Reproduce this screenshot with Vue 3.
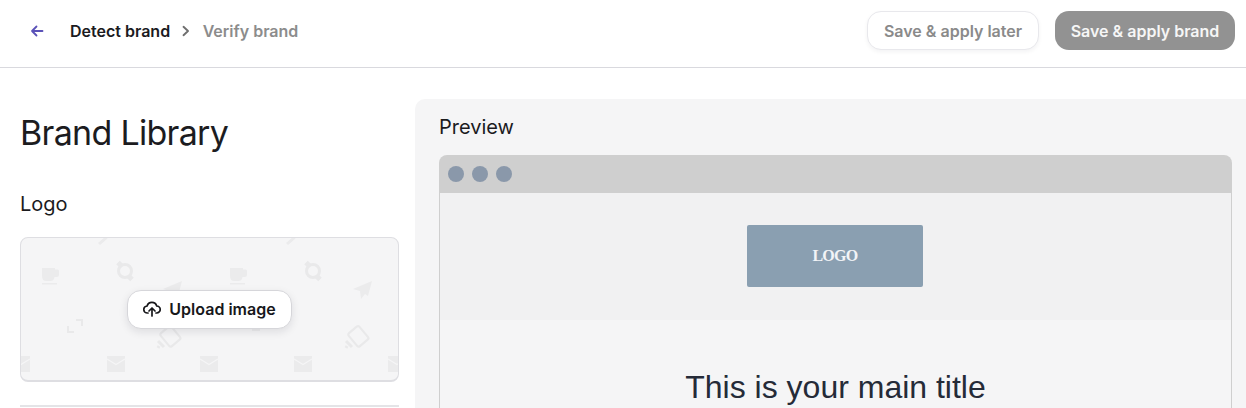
<template>
  <div class="page">
    <header class="topbar">
      <div class="crumbs">
        <button class="back" aria-label="Back">
          <svg width="16" height="16" viewBox="0 0 16 16" fill="none" stroke="#5b52b8" stroke-width="1.800" stroke-linecap="round" stroke-linejoin="round">
            <path d="M13.500 8H3M7.500 3.500 3 8l4.500 4.500" />
          </svg>
        </button>
        <span class="crumb-active">Detect brand</span>
        <svg class="chevron" width="10" height="12" viewBox="0 0 10 12" fill="none" stroke="#6f6f6f" stroke-width="1.900" stroke-linecap="round" stroke-linejoin="round">
          <path d="M2.500 1.800 7 6l-4.500 4.200" />
        </svg>
        <span class="crumb-next">Verify brand</span>
      </div>
      <div class="actions">
        <button class="btn btn-later">Save &amp; apply later</button>
        <button class="btn btn-apply">Save &amp; apply brand</button>
      </div>
    </header>

    <main class="content">
      <aside class="library">
        <h1>Brand Library</h1>
        <h2>Logo</h2>
        <div class="dropzone">
          <svg class="pattern" width="379" height="145" viewBox="0 0 379 145" fill="#ebebec">
            <defs>
              <g id="cup">
                <path d="M0 0h13v1.500h2.500a1.500 1.500 0 0 1 1.500 1.500v4a2 2 0 0 1-2 2h-2.500c-.6 3-2 4-4 4H4c-2.500 0-4-2-4-5z" />
                <rect x="0" y="15" width="15" height="1.500" />
              </g>
              <g id="mail">
                <rect width="18" height="16" />
                <path d="M0 3 9 8.500 18 3" fill="none" stroke="#f5f5f6" stroke-width="1.200" />
              </g>
              <g id="watch" fill="none" stroke="#e9e9ea" stroke-width="3">
                <circle cx="10" cy="10" r="6.500" />
                <path d="M3 1.500l4 4M13 14.500l4 4" stroke-width="5" />
              </g>
              <path id="plane" d="M19 0 0 8l7 2 1 8 4-5 3 2z" />
              <g id="tablet" fill="none" stroke="#e9e9ea" stroke-width="2.200">
                <rect x="6" y="2" width="14" height="17" rx="2" transform="rotate(-40 13 10)" />
                <path d="M1 15l6 6M2 20l-1 2" stroke-width="3" />
              </g>
            </defs>
            <use href="#cup" x="22" y="31" />
            <use href="#cup" x="210" y="31" />
            <use href="#watch" x="95" y="24" />
            <use href="#watch" x="283" y="24" />
            <use href="#plane" x="143" y="44" />
            <use href="#plane" x="333" y="44" />
            <use href="#tablet" x="137" y="89" />
            <use href="#tablet" x="325" y="89" />
            <use href="#mail" x="87" y="119" />
            <use href="#mail" x="180" y="119" />
            <use href="#mail" x="274" y="119" />
            <use href="#mail" x="-8" y="119" />
            <use href="#mail" x="368" y="119" />
            <path d="M78 6l7-6h3l-1 2-7 6zM266 6l7-6h3l-1 2-7 6z" />
            <rect x="232" y="92" width="8" height="2" />
            <path d="M56 83h6v6M54 95h-6v-6" fill="none" stroke="#e9e9ea" stroke-width="2" />
          </svg>
          <button class="upload">
            <svg width="18" height="16" viewBox="0 0 18 16" fill="none" stroke="#17171a" stroke-width="1.700" stroke-linecap="round" stroke-linejoin="round">
              <path d="M5 12H4.500a3.500 3.500 0 0 1-.4-7A5 5 0 0 1 13.700 5a3.500 3.500 0 0 1 0 7H13" />
              <path d="M9 15V7.500M6 10l3-3 3 3" />
            </svg>
            Upload image
          </button>
        </div>
        <div class="divider"></div>
      </aside>

      <section class="preview">
        <h2>Preview</h2>
        <div class="browser">
          <div class="browser-bar">
            <span class="dot"></span>
            <span class="dot"></span>
            <span class="dot"></span>
          </div>
          <div class="mail-head">
            <div class="logo-box">LOGO</div>
          </div>
          <div class="mail-body">
            <p class="main-title">This is your main title</p>
          </div>
        </div>
      </section>
    </main>
  </div>
</template>

<script setup>
</script>

<style>
html,
body {
  margin: 0;
  background: #fff;
  overflow: hidden;
}
</style>

<style scoped>
.page {
  width: 1246px;
  height: 408px;
  overflow: hidden;
  font-family: Inter, "Liberation Sans", sans-serif;
  color: #1b1b1e;
  background: #fff;
}

.topbar {
  height: 67px;
  display: flex;
  align-items: center;
  justify-content: space-between;
  padding: 0 11px 0 29px;
  border-bottom: 1px solid #d9d9de;
}

.crumbs {
  display: flex;
  align-items: center;
  margin-bottom: 6px;
  font-size: 16px;
  font-weight: 600;
}

.back {
  width: 16px;
  height: 16px;
  padding: 0;
  margin-right: 25px;
  border: 0;
  background: none;
  display: flex;
}

.chevron {
  margin: 0 11.500px 0 11px;
}

.crumb-next {
  color: #8c8c8c;
}

.actions {
  display: flex;
  gap: 16px;
  margin-bottom: 6px;
}

.btn {
  height: 39px;
  border-radius: 14px;
  font-family: inherit;
  font-size: 16px;
  font-weight: 600;
}

.btn-later {
  width: 172px;
  background: #fff;
  color: #8a8a8a;
  border: 1px solid #e8e8ec;
  box-shadow: 0 2px 4px rgba(20, 20, 40, 0.05);
}

.btn-apply {
  width: 180px;
  background: #929292;
  color: #f6f6f6;
  border: 0;
}

.content {
  display: flex;
}

.library {
  width: 379px;
  flex: none;
  padding: 0 16px 0 20px;
}

h1 {
  margin: 46px 0 0;
  font-size: 34px;
  line-height: 38px;
  font-weight: 400;
  letter-spacing: -0.7px;
  color: #1c1c1f;
}

h2 {
  margin: 0;
  font-size: 20px;
  line-height: 28px;
  font-weight: 400;
}

.library h2 {
  margin-top: 38px;
}

.dropzone {
  position: relative;
  height: 145px;
  margin-top: 19px;
  box-sizing: border-box;
  border: 1px solid #dedee2;
  border-bottom-width: 2px;
  border-radius: 8px;
  background: #f5f5f6;
  display: flex;
  align-items: center;
  justify-content: center;
  overflow: hidden;
}

.pattern {
  position: absolute;
  left: -1px;
  top: -1px;
}

.upload {
  position: relative;
  width: 165px;
  height: 39px;
  display: flex;
  align-items: center;
  justify-content: center;
  gap: 8px;
  border: 1px solid #d6d6da;
  border-radius: 14px;
  background: #fff;
  color: #17171a;
  font-family: inherit;
  font-size: 16px;
  font-weight: 600;
  box-shadow: 0 3px 8px rgba(20, 20, 40, 0.1);
}

.divider {
  height: 2px;
  margin-top: 23px;
  background: #e4e4e7;
}

.preview {
  flex: 1;
  margin-top: 31px;
  padding: 14px 14px 0 24px;
  background: #f5f5f6;
  border-top-left-radius: 10px;
}

.browser {
  margin-top: 14px;
}

.browser-bar {
  height: 38px;
  box-sizing: border-box;
  padding: 0 9px;
  display: flex;
  align-items: center;
  gap: 8px;
  background: #cfcfcf;
  border-radius: 8px 8px 0 0;
}

.dot {
  width: 16px;
  height: 16px;
  border-radius: 50%;
  background: #8a98aa;
}

.mail-head {
  height: 127px;
  display: flex;
  justify-content: center;
  padding: 32px 1px 0 0;
  box-sizing: border-box;
  background: #f1f1f2;
  border: solid #cfcfcf;
  border-width: 0 1px;
}

.logo-box {
  width: 176px;
  height: 62px;
  display: flex;
  align-items: center;
  justify-content: center;
  background: #8a9fb1;
  border-radius: 2px;
  color: #f2f4f7;
  font-family: "Liberation Serif", serif;
  font-size: 16px;
  font-weight: 700;
  letter-spacing: -0.7px;
}

.mail-body {
  height: 120px;
  box-sizing: border-box;
  padding-top: 49px;
  border: solid #cfcfcf;
  border-width: 0 1px;
}

.main-title {
  margin: 0;
  text-align: center;
  font-family: "Liberation Sans", sans-serif;
  font-size: 32px;
  line-height: 37px;
  color: #252b38;
}
</style>
